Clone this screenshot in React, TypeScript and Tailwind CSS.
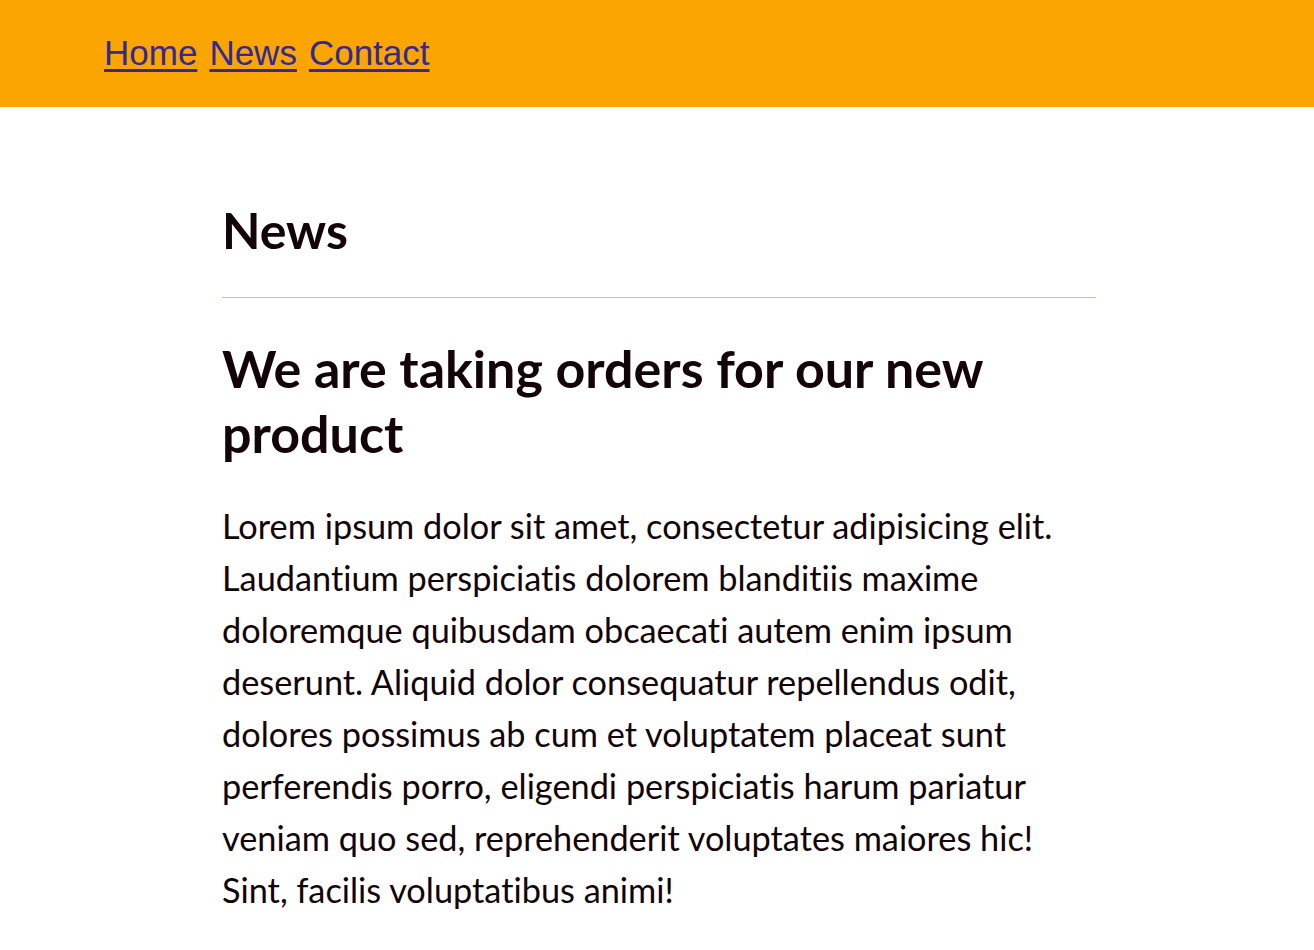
import React from 'react';

const links = ['Home', 'News', 'Contact'];

export default function App() {
  return (
    <div className="min-h-screen bg-white">
      <header className="h-[107px] bg-[#faa502] flex items-center pl-[104px] pb-[2px]">
        <nav className="flex gap-[12px] font-['Liberation_Sans',Arial,sans-serif] text-[35px] leading-none">
          {links.map((l) => (
            <a key={l} href="#" className="text-[#332a8f] underline decoration-[3px] underline-offset-[4px]">
              {l}
            </a>
          ))}
        </nav>
      </header>

      <main className="max-w-[878px] mx-auto pl-[4px] pt-[91px] font-['Lato',sans-serif] text-[#120408] [font-variant-ligatures:none]">
        <h1 className="text-[50px] font-bold leading-[64px]">News</h1>
        <hr className="mt-[35px] border-0 h-[1px] bg-[#d8b894]" />
        <h2 className="mt-[38px] text-[52px] font-bold leading-[65px]">
          We are taking orders for our new product
        </h2>
        <p className="mt-[34px] text-[34.3px] leading-[52px]">
          Lorem ipsum dolor sit amet, consectetur adipisicing elit. Laudantium perspiciatis dolorem blanditiis maxime
          doloremque quibusdam obcaecati autem enim ipsum deserunt. Aliquid dolor consequatur repellendus odit, dolores
          possimus ab cum et voluptatem placeat sunt perferendis porro, eligendi perspiciatis harum pariatur veniam quo
          sed, reprehenderit voluptates maiores hic! Sint, facilis voluptatibus animi!
        </p>
      </main>
    </div>
  );
}
